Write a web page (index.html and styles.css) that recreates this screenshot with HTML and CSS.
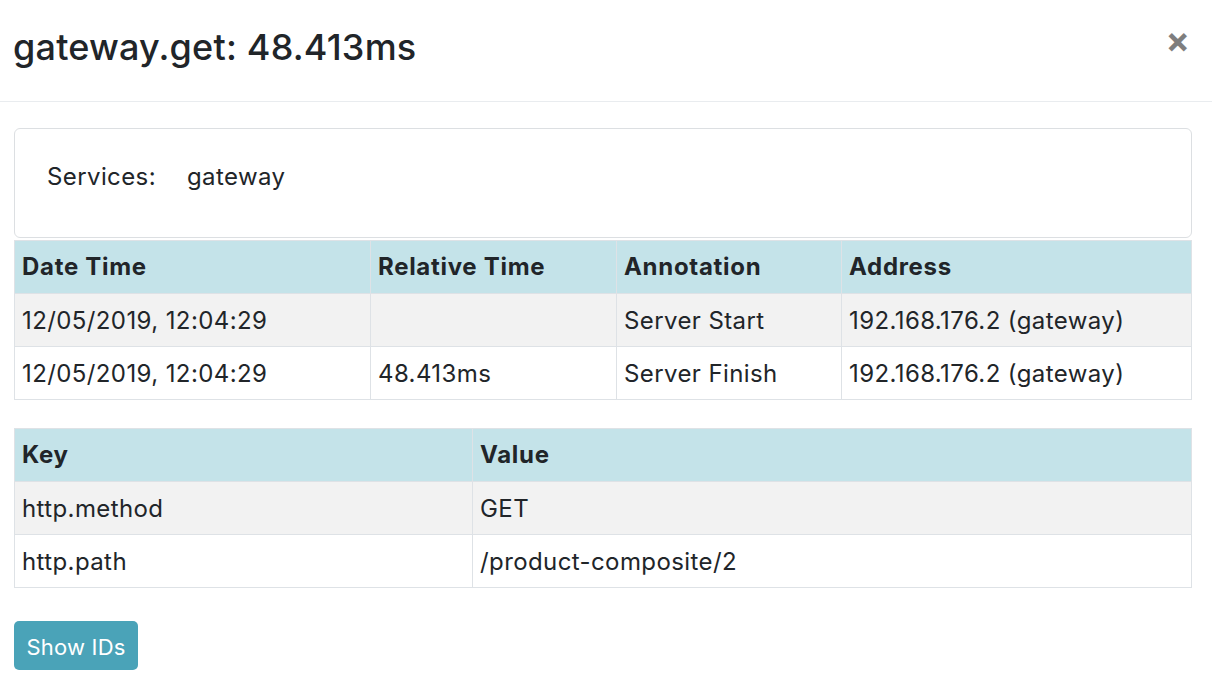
FILE: index.html
```html
<!DOCTYPE html>
<html>
<head>
<meta charset="utf-8">
<link rel="stylesheet" href="styles.css">
</head>
<body>
<div class="modal">
  <div class="modal-header">
    <h4 class="modal-title">gateway.get: 48.413ms</h4>
    <button class="close" type="button">×</button>
  </div>
  <div class="modal-body">
    <div class="card">
      <span class="label">Services:</span>
      <span class="value">gateway</span>
    </div>
    <table class="table annotations">
      <thead>
        <tr><th class="c1">Date Time</th><th class="c2">Relative Time</th><th class="c3">Annotation</th><th>Address</th></tr>
      </thead>
      <tbody>
        <tr><td>12/05/2019, 12:04:29</td><td></td><td>Server Start</td><td>192.168.176.2 (gateway)</td></tr>
        <tr><td>12/05/2019, 12:04:29</td><td>48.413ms</td><td>Server Finish</td><td>192.168.176.2 (gateway)</td></tr>
      </tbody>
    </table>
    <table class="table tags">
      <thead>
        <tr><th class="k1">Key</th><th>Value</th></tr>
      </thead>
      <tbody>
        <tr><td>http.method</td><td>GET</td></tr>
        <tr><td>http.path</td><td>/product-composite/2</td></tr>
      </tbody>
    </table>
    <button class="btn-info" type="button">Show IDs</button>
  </div>
</div>
</body>
</html>
```
FILE: styles.css
```css
* { box-sizing: border-box; }
html, body { margin: 0; padding: 0; background: #fff; }
body {
  font-family: Inter, "Liberation Sans", sans-serif;
  color: #212529;
  font-size: 24px;
  line-height: 1.5;
  letter-spacing: 0.4px;
}
.modal { width: 1212px; }
.modal-header {
  height: 102px;
  display: flex;
  align-items: flex-start;
  justify-content: space-between;
  border-bottom: 1px solid #e9ecef;
  padding: 20px 22px 0 13px;
}
.modal-title {
  margin: 0;
  font-size: 36px;
  font-weight: 500;
  line-height: 54px;
  letter-spacing: 0.2px;
}
.close {
  background: none;
  border: 0;
  padding: 0;
  margin-top: 2px;
  font-family: Inter, "Liberation Sans", sans-serif;
  font-size: 36px;
  font-weight: 700;
  line-height: 36px;
  color: #000;
  opacity: .5;
}
.modal-body { padding: 26px 20px 20px 14px; }
.card {
  border: 1px solid #dcdfe2;
  border-radius: 6px;
  height: 110px;
  display: flex;
  align-items: center;
  padding: 0 0 12px 32px;
  margin-bottom: 2px;
}
.card .label { width: 140px; }
.table {
  width: 100%;
  border-collapse: collapse;
  margin-bottom: 28px;
}
.table th, .table td {
  border: 1px solid #dee2e6;
  padding: 9px 7px 7px 7px;
  text-align: left;
  vertical-align: top;
  line-height: 36px;
  height: 53px;
}
.table th { background: #c4e3e9; font-weight: 700; letter-spacing: 0.7px; padding-top: 8px; padding-bottom: 8px; }
.table tbody tr:nth-child(odd) td { background: #f2f2f2; }
.c1 { width: 356px; }
.c2 { width: 246px; }
.c3 { width: 225px; }
.k1 { width: 458px; }
.tags { margin-bottom: 33px; }
.btn-info {
  background: #4aa3b8;
  color: #fff;
  border: 0;
  border-radius: 5px;
  width: 124px;
  height: 49px;
  font-family: Inter, "Liberation Sans", sans-serif;
  font-size: 22px;
  letter-spacing: 0.2px;
  padding: 2px 0 0;
  display: block;
}
```
